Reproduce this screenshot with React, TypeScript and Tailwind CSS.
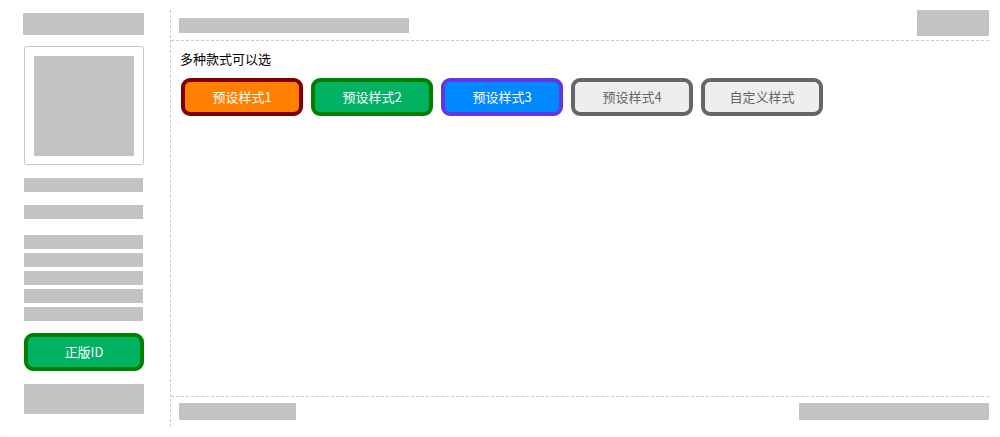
import React from 'react';

const font = { fontFamily: '"Microsoft YaHei", "Noto Sans CJK SC", "Liberation Sans", sans-serif' };

// Barras de placeholder cinza
function Bar({ className }: { className: string }) {
  return <div className={`bg-[#c3c3c3] ${className}`} />;
}

const styles = [
  { label: '预设样式1', cls: 'bg-[#ff8000] border-[#800000] text-white' },
  { label: '预设样式2', cls: 'bg-[#00b262] border-[#008000] text-white' },
  { label: '预设样式3', cls: 'bg-[#0088ff] border-[#6236e0] text-white' },
  { label: '预设样式4', cls: 'bg-[#eeeeee] border-[#666666] text-[#666666]' },
  { label: '自定义样式', cls: 'bg-[#eeeeee] border-[#666666] text-[#666666]' },
];

function Sidebar() {
  return (
    <div className="w-[170px] shrink-0 pl-[23px] pt-[13px] flex flex-col">
      <Bar className="w-[121px] h-[22px]" />
      <div className="ml-px mt-[11px] w-[120px] h-[119px] border border-[#c8c8c8] rounded-[2px] flex items-center justify-center">
        <Bar className="w-[100px] h-[100px]" />
      </div>
      <div className="ml-px mt-[13px] flex flex-col">
        <Bar className="w-[119px] h-[14px]" />
        <Bar className="w-[119px] h-[14px] mt-[13px]" />
        <div className="mt-[16px] flex flex-col gap-[4px]">
          <Bar className="w-[119px] h-[14px]" />
          <Bar className="w-[119px] h-[14px]" />
          <Bar className="w-[119px] h-[14px]" />
          <Bar className="w-[119px] h-[14px]" />
          <Bar className="w-[119px] h-[14px]" />
        </div>
        <button className="mt-[12px] w-[120px] h-[38px] rounded-[9px] border-4 border-[#008000] bg-[#00b262] text-white text-[13px] flex items-center justify-center">
          正版ID
        </button>
        <Bar className="w-[120px] h-[30px] mt-[13px]" />
      </div>
    </div>
  );
}

function Main() {
  return (
    <div className="mt-[10px] w-[819px] h-[417px] border-l border-dashed border-[#cccccc] flex flex-col">
      <div className="h-[31px] shrink-0 border-b border-dashed border-[#cccccc] flex items-start justify-between pl-[8px]">
        <Bar className="w-[230px] h-[15px] mt-[8px]" />
        <Bar className="w-[72px] h-[26px]" />
      </div>
      <div className="flex-1 pl-[9px] pt-[9px]">
        <div className="text-[13px] leading-[18px] text-black">多种款式可以选</div>
        <div className="mt-[10px] flex gap-[8px] pl-px">
          {styles.map((s) => (
            <button
              key={s.label}
              className={`w-[122px] h-[38px] rounded-[9px] border-4 text-[13px] flex items-center justify-center ${s.cls}`}
            >
              {s.label}
            </button>
          ))}
        </div>
      </div>
      <div className="h-[31px] shrink-0 border-t border-dashed border-[#cccccc] flex items-start justify-between pl-[8px] pt-[6px]">
        <Bar className="w-[117px] h-[17px]" />
        <Bar className="w-[190px] h-[17px]" />
      </div>
    </div>
  );
}

export default function App() {
  return (
    <div className="w-[1000px] h-[437px] bg-[#fbfbfb]" style={font}>
      <div className="w-[1000px] h-[435px] bg-white rounded-[3px] flex">
        <Sidebar />
        <Main />
      </div>
    </div>
  );
}
